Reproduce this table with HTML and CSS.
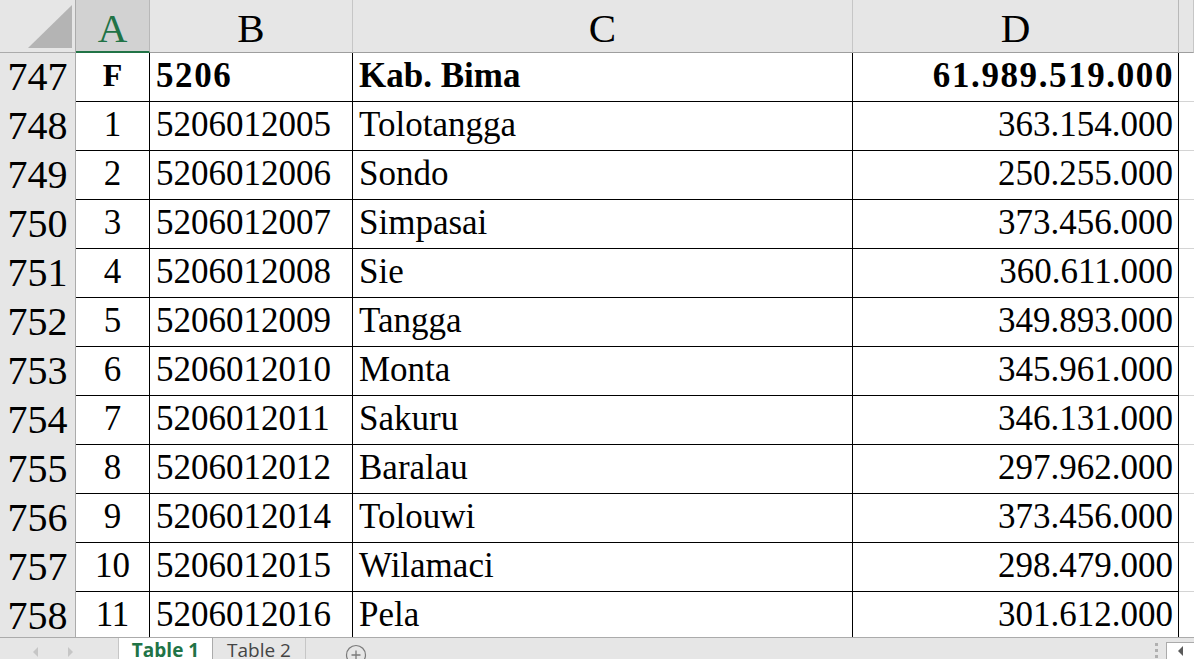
FILE: index.html
```html
<!DOCTYPE html>
<html>
<head>
<meta charset="utf-8">
<link rel="stylesheet" href="styles.css">
</head>
<body>
<div class="sheet">
  <div class="grid">
    <div class="row hdr">
      <div class="rh corner"><div class="tri"></div></div>
      <div class="ch ca sel">A</div>
      <div class="ch cb">B</div>
      <div class="ch cc">C</div>
      <div class="ch cd">D</div>
      <div class="ch ce"></div>
    </div>
    <div class="row bold">
      <div class="rh">747</div>
      <div class="c ca ctr">F</div>
      <div class="c cb sp">5206</div>
      <div class="c cc">Kab. Bima</div>
      <div class="c cd num sp">61.989.519.000</div>
      <div class="c ce"></div>
    </div>
    <div class="row"><div class="rh">748</div><div class="c ca ctr">1</div><div class="c cb">5206012005</div><div class="c cc">Tolotangga</div><div class="c cd num">363.154.000</div><div class="c ce"></div></div>
    <div class="row"><div class="rh">749</div><div class="c ca ctr">2</div><div class="c cb">5206012006</div><div class="c cc">Sondo</div><div class="c cd num">250.255.000</div><div class="c ce"></div></div>
    <div class="row"><div class="rh">750</div><div class="c ca ctr">3</div><div class="c cb">5206012007</div><div class="c cc">Simpasai</div><div class="c cd num">373.456.000</div><div class="c ce"></div></div>
    <div class="row"><div class="rh">751</div><div class="c ca ctr">4</div><div class="c cb">5206012008</div><div class="c cc">Sie</div><div class="c cd num">360.611.000</div><div class="c ce"></div></div>
    <div class="row"><div class="rh">752</div><div class="c ca ctr">5</div><div class="c cb">5206012009</div><div class="c cc">Tangga</div><div class="c cd num">349.893.000</div><div class="c ce"></div></div>
    <div class="row"><div class="rh">753</div><div class="c ca ctr">6</div><div class="c cb">5206012010</div><div class="c cc">Monta</div><div class="c cd num">345.961.000</div><div class="c ce"></div></div>
    <div class="row"><div class="rh">754</div><div class="c ca ctr">7</div><div class="c cb">5206012011</div><div class="c cc">Sakuru</div><div class="c cd num">346.131.000</div><div class="c ce"></div></div>
    <div class="row"><div class="rh">755</div><div class="c ca ctr">8</div><div class="c cb">5206012012</div><div class="c cc">Baralau</div><div class="c cd num">297.962.000</div><div class="c ce"></div></div>
    <div class="row"><div class="rh">756</div><div class="c ca ctr">9</div><div class="c cb">5206012014</div><div class="c cc">Tolouwi</div><div class="c cd num">373.456.000</div><div class="c ce"></div></div>
    <div class="row"><div class="rh">757</div><div class="c ca ctr">10</div><div class="c cb">5206012015</div><div class="c cc">Wilamaci</div><div class="c cd num">298.479.000</div><div class="c ce"></div></div>
    <div class="row"><div class="rh">758</div><div class="c ca ctr">11</div><div class="c cb">5206012016</div><div class="c cc">Pela</div><div class="c cd num">301.612.000</div><div class="c ce"></div></div>
  </div>
  <div class="tabbar">
    <div class="nav">
      <svg width="10" height="12" viewBox="0 0 10 12"><path d="M7 1 L2 6 L7 11 Z" fill="#c6c6c6"/></svg>
      <svg width="10" height="12" viewBox="0 0 10 12"><path d="M3 1 L8 6 L3 11 Z" fill="#c6c6c6"/></svg>
    </div>
    <div class="tab active"><span>Table 1</span></div>
    <div class="tab"><span>Table 2</span></div>
    <div class="add">
      <svg width="22" height="22" viewBox="0 0 22 22"><circle cx="11" cy="11" r="9.5" fill="none" stroke="#7a7a7a" stroke-width="1.2"/><path d="M11 6.5 V15.5 M6.5 11 H15.5" stroke="#7a7a7a" stroke-width="1.3"/></svg>
    </div>
    <div class="spacer"></div>
    <div class="dots"><span></span><span></span><span></span></div>
    <div class="scrollbtn">
      <svg width="8" height="12" viewBox="0 0 8 12"><path d="M6 1 L1 6 L6 11 Z" fill="#5a5a5a"/></svg>
    </div>
  </div>
</div>
</body>
</html>
```

FILE: styles.css
```css
* { box-sizing: border-box; }
html, body { margin: 0; padding: 0; }
body { width: 1194px; height: 659px; overflow: hidden; background: #fff; }
.sheet { width: 1194px; height: 659px; display: flex; flex-direction: column; }
.grid { height: 637px; overflow: hidden; display: flex; flex-direction: column; }
.row { display: flex; height: 49px; flex: none; }
.row.hdr { height: 53px; }
.rh {
  width: 76px; flex: none; background: #e6e6e6; border-right: 1px solid #ababab;
  font-family: "Liberation Serif", serif; font-size: 40px; color: #000;
  display: flex; align-items: center; justify-content: center; padding-bottom: 2px;
}
.corner { position: relative; border-bottom: 1px solid #ababab; }
.tri {
  position: absolute; right: 3px; bottom: 4px; width: 44px; height: 43px;
  background: #b4b4b4; clip-path: polygon(100% 0, 100% 100%, 0 100%);
}
.ch {
  background: #e6e6e6; border-right: 1px solid #c6c6c6; border-bottom: 1px solid #9e9e9e;
  font-family: "Liberation Serif", serif; font-size: 41px; color: #000;
  display: flex; align-items: center; justify-content: center; padding-top: 4px;
}
.ch.sel { background: #d2d2d2; color: #217346; border-bottom: 2px solid #217346; border-right-color: #b8b8b8; }
.ch.cd { border-right-color: #b8b8b8; }
.ca { width: 74px; flex: none; }
.cb { width: 203px; flex: none; }
.cc { width: 500px; flex: none; }
.cd { width: 326px; flex: none; }
.ce { flex: 1; }
.c {
  border-right: 1px solid #000; border-bottom: 1px solid #000;
  font-family: "Liberation Serif", serif; font-size: 35px; color: #000;
  display: flex; align-items: center; padding: 0 6px 3px 6px; white-space: nowrap;
}
.c.ca { padding: 0 0 3px 0; }
.c.ce { border-right: none; border-bottom: 1px solid #d4d4d4; }
.ctr { justify-content: center; }
.num { justify-content: flex-end; padding-right: 5px; }
.row.bold .c { font-weight: bold; }
.row.bold .c.sp { letter-spacing: 1.6px; }
.row.bold .c.num { padding-right: 4px; }
.row.bold .c.ca { font-size: 32px; }
.tabbar {
  height: 22px; flex: none; background: #e6e6e6; border-top: 1px solid #ababab;
  display: flex; align-items: stretch; overflow: hidden;
  font-family: "Open Sans", "Noto Sans", sans-serif; font-size: 19px;
}
.nav {
  width: 119px; flex: none; border-right: 1px solid #c6c6c6;
  display: flex; align-items: center; justify-content: center; gap: 24px; padding-right: 12px; padding-top: 6px;
}
.tab {
  display: flex; align-items: flex-start; justify-content: center; color: #444;
  width: 93px; flex: none; border-right: 1px solid #c6c6c6; line-height: 1;
  padding-top: 3px; white-space: nowrap;
}
.tab.active {
  background: #fff; color: #217346; font-weight: bold; margin-top: -1px; width: 94px;
  border-right: 1px solid #ababab; padding-top: 4px;
}
.add { width: 100px; flex: none; display: flex; align-items: flex-start; justify-content: center; padding-top: 6px; }
.add svg { display: block; }
.spacer { flex: 1; }
.dots { width: 20px; display: flex; flex-direction: column; align-items: center; justify-content: center; gap: 3px; padding-top: 4px; }
.dots span { width: 3px; height: 3px; background: #b0b0b0; display: block; }
.scrollbtn {
  width: 28px; flex: none; background: #fff; border-left: 1px solid #ababab; border-top: 1px solid #ababab;
  margin-top: 4px; display: flex; align-items: center; justify-content: center;
}
```
